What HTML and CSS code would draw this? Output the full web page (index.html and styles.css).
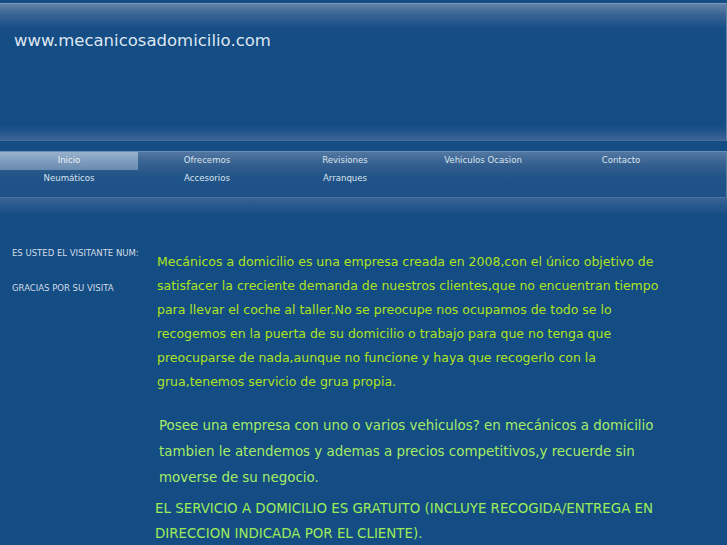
FILE: index.html
```html
<!DOCTYPE html>
<html>
<head>
<meta charset="utf-8">
<link rel="stylesheet" href="styles.css">
</head>
<body>
<div class="header">
  <div class="site-title">www.mecanicosadomicilio.com</div>
</div>
<div class="nav">
  <div class="nav-row">
    <a class="nav-item active">Inicio</a>
    <a class="nav-item">Ofrecemos</a>
    <a class="nav-item">Revisiones</a>
    <a class="nav-item">Vehiculos Ocasion</a>
    <a class="nav-item">Contacto</a>
  </div>
  <div class="nav-row">
    <a class="nav-item">Neumáticos</a>
    <a class="nav-item">Accesorios</a>
    <a class="nav-item">Arranques</a>
  </div>
</div>
<div class="subband"></div>
<div class="main">
  <div class="sidebar">
    <p class="side-text">ES USTED EL VISITANTE NUM:</p>
    <p class="side-text">GRACIAS POR SU VISITA</p>
  </div>
  <div class="content">
    <p class="p1">Mecánicos a domicilio es una empresa creada en 2008,con el único objetivo de satisfacer la creciente demanda de nuestros clientes,que no encuentran tiempo para llevar el coche al taller.No se preocupe nos ocupamos de todo se lo recogemos en la puerta de su domicilio o trabajo para que no tenga que preocuparse de nada,aunque no funcione y haya que recogerlo con la grua,tenemos servicio de grua propia.</p>
    <p class="p2">Posee una empresa con uno o varios vehiculos? en mecánicos a domicilio tambien le atendemos y ademas a precios competitivos,y recuerde sin moverse de su negocio.</p>
    <p class="p3">EL SERVICIO A DOMICILIO ES GRATUITO (INCLUYE RECOGIDA/ENTREGA EN DIRECCION INDICADA POR EL CLIENTE).</p>
  </div>
</div>
</body>
</html>
```
FILE: styles.css
```css
html, body {
  margin: 0;
  padding: 0;
  background: #144c84;
  font-family: "DejaVu Sans", Verdana, sans-serif;
  overflow: hidden;
}
.header {
  margin-top: 3px;
  height: 138px;
  box-sizing: border-box;
  border-top: 1px solid #7a98bc;
  border-right: 1px solid #5f82aa;
  background: linear-gradient(to bottom, #6183aa 0px, #3a6494 10px, #184e86 24px, #144c84 40px, #144c84 120px, #1f5289 126px, #3d6596 136px, #5a7ca4 138px);
}
.site-title {
  padding: 27px 0 0 14px;
  font-size: 16.5px;
  line-height: 20px;
  color: #dde7f1;
}
.nav {
  margin-top: 10px;
  height: 46px;
  box-sizing: border-box;
  border-top: 1px solid #6d8eb4;
  border-right: 1px solid #5a7ca4;
  background: linear-gradient(to bottom, #5377a2 0px, #35608f 12px, #215488 24px, #1c5087 46px);
}
.nav-row {
  display: flex;
}
.nav-item {
  width: 138px;
  height: 18px;
  line-height: 16px;
  text-align: center;
  font-size: 8.6px;
  color: #d9e3ee;
}
.nav-item.active {
  background: linear-gradient(to bottom, #9ab2cc 0px, #7e9cbd 9px, #6a8bb0 18px);
  color: #eef3f8;
}
.subband {
  height: 16px;
  border-top: 1px solid #4a70a0;
  background: linear-gradient(to bottom, #3a6394 0px, #2a5a8e 6px, #1a4f86 16px);
}
.main {
  display: flex;
  padding-top: 32px;
}
.sidebar {
  width: 157px;
  flex: none;
  padding-left: 12px;
  box-sizing: border-box;
}
.side-text {
  margin: 1px 0 22px 0;
  font-size: 8.5px;
  line-height: 13px;
  color: #d3dce6;
  white-space: nowrap;
}
.content {
  width: 530px;
}
.p1 {
  margin: 4px 0 0 0;
  font-size: 12.5px;
  line-height: 24px;
  color: #aee41c;
  width: 512px;
}
.p2 {
  margin: 19px 0 0 2px;
  font-size: 13.4px;
  line-height: 26px;
  color: #a6ec64;
  width: 505px;
}
.p3 {
  margin: 5px 0 0 -2px;
  font-size: 13.4px;
  line-height: 25px;
  color: #9cec5a;
  width: 520px;
}
```
